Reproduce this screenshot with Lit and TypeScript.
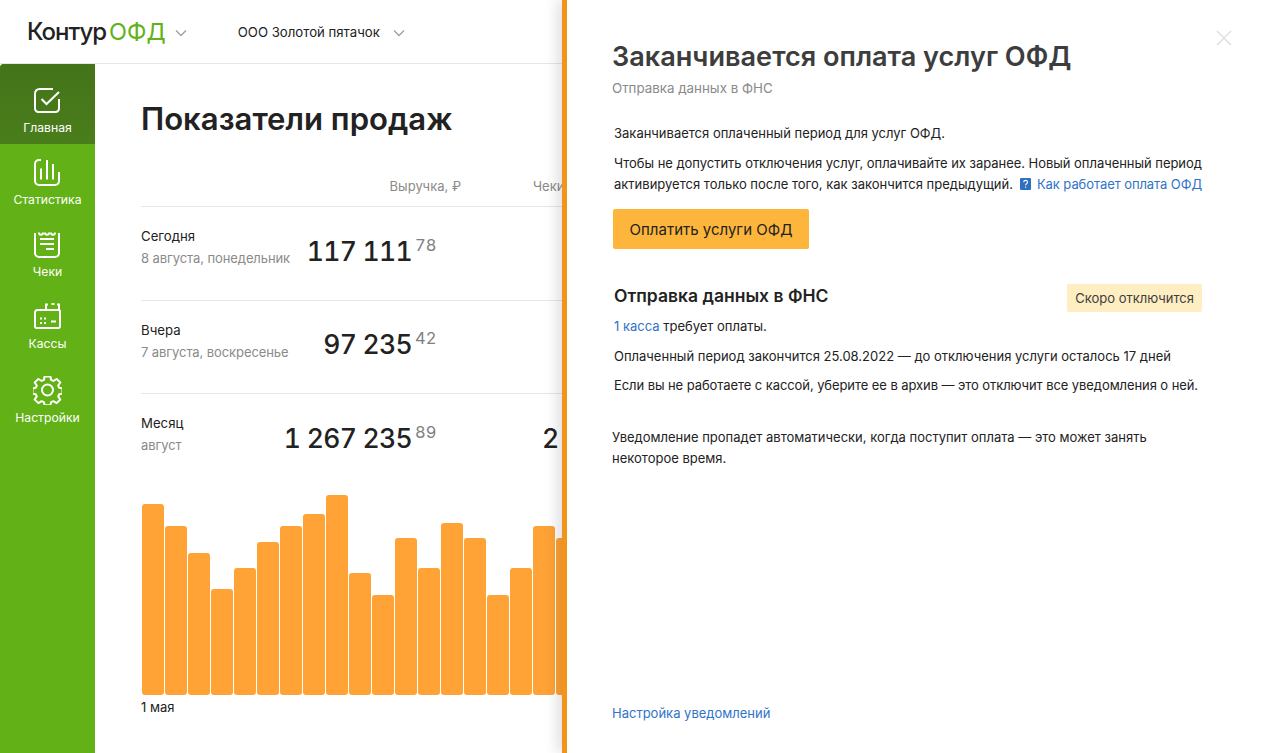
import { LitElement, html, css, svg } from "lit";
import { customElement } from "lit/decorators.js";

const BARS = [191,169,142,106,127,153,169,181,200,122,100,157,127,172,157,100,127,169,157];

const chev = html`<svg class="chev" width="12" height="8" viewBox="0 0 12 8"><path d="M1 1.5l5 5 5-5" fill="none" stroke="#a0a0a0" stroke-width="1.3"/></svg>`;

const ICONS: Record<string, unknown> = {
  home: svg`<path d="M20 2H6.500A4.500 4.500 0 0 0 2 6.500v15A3.500 3.500 0 0 0 5.500 25h17a3.500 3.500 0 0 0 3.500-3.500V12" fill="none" stroke="#fff" stroke-width="2"/><path d="M8.500 12l5 5L26 5" fill="none" stroke="#fff" stroke-width="2"/>`,
  stats: svg`<path d="M8 1H6A4 4 0 0 0 2 5v17a4 4 0 0 0 4 4h16a4 4 0 0 0 4-4v-9M8 9.500V20.500M14 1v19.500M20 5v15.500" fill="none" stroke="#fff" stroke-width="2"/>`,
  checks: svg`<path d="M2 2v20a4 4 0 0 0 4 4h16a4 4 0 0 0 4-4V2" fill="none" stroke="#fff" stroke-width="2"/><path d="M6 1.500c0 3 4 3 4 0M12 1.500c0 3 4 3 4 0M18 1.500c0 3 4 3 4 0M7 8h14M7 13h14M13 18h8" fill="none" stroke="#fff" stroke-width="2"/>`,
  kassa: svg`<path d="M13 7H4.500A2.500 2.500 0 0 0 2 9.500v14A1.500 1.500 0 0 0 3.500 25h22a1.500 1.500 0 0 0 1.500-1.500V8a1 1 0 0 0-1-1h-13V1.500h2M18.500 1h3M24 1.500h2V7" fill="none" stroke="#fff" stroke-width="2"/><path d="M7 15.500h2M11 15.500h2M7 20h2M11 20h2M18 18.500h5" fill="none" stroke="#fff" stroke-width="2"/>`,
  gear: svg`<path d="M11.600 1.500h5.800l.7 3.700 2.300 1 3.200-2.100 3.700 3.700-2.100 3.200 1 2.300 3.300.7v5.400l-3.300.7-1 2.300 2.100 3.200-3.700 3.700-3.200-2.100-2.300 1-.7 3.300h-5.800l-.7-3.300-2.300-1-3.200 2.100-3.700-3.700 2.100-3.200-1-2.300-3.300-.7v-5.400l3.300-.7 1-2.300-2.100-3.200 3.700-3.700 3.200 2.100 2.300-1z" fill="none" stroke="#fff" stroke-width="2" stroke-linejoin="round" transform="translate(0 -1) scale(1 .96)"/><circle cx="14.500" cy="14" r="5.500" fill="none" stroke="#fff" stroke-width="2"/>`,
};

@customElement("nav-item")
class NavItem extends LitElement {
  static properties = { icon: {}, label: {}, active: { type: Boolean, reflect: true } };
  declare icon: string; declare label: string; declare active: boolean;
  static styles = css`
    :host { display: flex; flex-direction: column; align-items: center; height: 72px; color: #fff; font: 12.200px/16px Inter, sans-serif; padding-top: 15px; box-sizing: border-box; }
    :host([active]) { height: 80px; padding-top: 23px; background: linear-gradient(#44741a, #4a7d1b); border-top-left-radius: 4px; }
    :host([last]) { padding-top: 16px; }
    svg { display: block; margin-bottom: 4px; }
    :host([last]) svg { margin-bottom: 5px; }
  `;
  render() {
    return html`<svg width="29" height="29" viewBox="0 0 29 29">${ICONS[this.icon]}</svg><span>${this.label}</span>`;
  }
}

@customElement("app-root")
class AppRoot extends LitElement {
  static styles = css`
    :host { display: block; position: relative; width: 1262px; height: 753px; overflow: hidden; background: #fff; color: #222; font: 13px/21px Inter, sans-serif; }
    .header { height: 64px; box-sizing: border-box; border-bottom: 1px solid #e6e6e6; display: flex; align-items: center; padding-left: 27px; }
    .logo { font-size: 24px; font-weight: 500; letter-spacing: -1px; color: #222; display: flex; gap: 3px; }
    .logo b { font-weight: 400; font-size: 23.500px; color: #62b116; letter-spacing: 0; }
    .chev { margin-left: 9px; margin-top: 2px; display: block; }
    .company { margin-left: 51px; margin-top: 1px; font-size: 13.200px; color: #222; }
    .chev2 { margin-left: 4px; }
    .body { display: flex; height: 689px; }
    .nav { width: 95px; flex: none; background: #62b116; border-top-left-radius: 4px; }
    .main { flex: 1; padding: 35px 0 0 46px; min-width: 0; }
    h1 { margin: 0; font-size: 31.100px; line-height: 40px; font-weight: 600; color: #222; }
    .thead { display: flex; margin: 37px 0 10px; height: 20px; line-height: 20px; color: #8a8a8a; }
    .thead span:first-child { width: 320px; text-align: right; }
    .thead .c { padding-left: 72px; white-space: nowrap; }
    .row { display: flex; border-top: 1px solid #e6e6e6; height: 93.500px; box-sizing: border-box; padding-top: 19px; }
    .cell { width: 271px; flex: none; display: flex; justify-content: space-between; }
    .lbl { font-size: 13.200px; line-height: 20px; color: #222; }
    .sub { font-size: 13px; line-height: 20px; margin-top: 2px; color: #8a8a8a; white-space: nowrap; letter-spacing: -0.09px; }
    .num { margin-top: 8px; font-size: 26.500px; line-height: 34px; font-weight: 500; color: #222; display: flex; align-items: flex-start; white-space: nowrap; font-variant-numeric: tabular-nums; letter-spacing: -0.7px; }
    .num.tight { margin-top: 7px; }
    .num sup { font-size: 16.500px; line-height: 22px; letter-spacing: 0; color: #808080; font-weight: 400; margin-left: 3px; width: 22px; margin-right: -25px; }
    .extra { padding-left: 130px; }
    .rail { display: flex; align-items: flex-end; gap: 1px; height: 200px; margin-top: 8px; margin-left: 1px; overflow: hidden; }
    .bar { flex: none; width: 22px; background: #ffa336; border-radius: 3px; }
    .first { margin-top: 2px; line-height: 20px; }
    .panel { position: absolute; top: 0; bottom: 0; left: 562px; right: 0; background: #fff; border-left: 5px solid #f29419; box-shadow: -4px 0 14px rgba(0,0,0,.14); padding: 37px 60px 29px 45px; display: flex; flex-direction: column; }
    .panel h2 { margin: 0; font-size: 27.100px; line-height: 40px; font-weight: 600; color: #3d3d3d; white-space: nowrap; }
    .panel .subtitle { margin-top: 1px; line-height: 20px; font-size: 13.330px; color: #8a8a8a; }
    .content { margin: 25px 0 0 2px; line-height: 21px; white-space: nowrap; }
    p { margin: 0 0 9px; }
    p.fit { letter-spacing: -0.08px; }
    .tighter { letter-spacing: -0.035px; }
    a { color: #2f74c8; text-decoration: none; }
    a.how { letter-spacing: -0.08px; }
    .btn { display: flex; align-items: center; margin-top: 14px; margin-left: -1px; height: 40px; width: 196px; box-sizing: border-box; justify-content: center; background: #fdb63b; border-radius: 2px; font-size: 15px; color: #222; }
    .shead { display: flex; justify-content: space-between; align-items: center; margin-top: 35px; height: 28px; }
    .shead strong { font-size: 17.500px; font-weight: 600; margin-top: -6px; }
    .badge { background: #ffeec2; border-radius: 2px; height: 28px; padding: 0 8px; display: flex; align-items: center; white-space: nowrap; color: #3d3d3d; }
    .lines { margin-top: 4px; }
    .lines p.gap8 { margin-bottom: 8px; }
    .note { margin: 22px 0 0; }
    .foot { margin-top: auto; }
    .help { vertical-align: -1px; margin: 0 6px 0 7px; }
    .close { position: absolute; top: 30px; right: 30px; }
  `;
  rowTpl(lbl: string, sub: string, num: string, cents: string, extra = "", tight = false) {
    return html`<div class="row"><div class="cell"><div><div class="lbl">${lbl}</div><div class="sub">${sub}</div></div><div class="num ${tight ? "tight" : ""}">${num}<sup>${cents}</sup></div></div>${extra ? html`<div class="num extra">${extra}</div>` : ""}</div>`;
  }
  render() {
    return html`
      <div class="header">
        <div class="logo"><span>Контур</span><b>ОФД</b></div>
        ${chev}
        <div class="company">ООО Золотой пятачок</div>
        <span class="chev2">${chev}</span>
      </div>
      <div class="body">
        <div class="nav">
          <nav-item icon="home" label="Главная" active></nav-item>
          <nav-item icon="stats" label="Статистика"></nav-item>
          <nav-item icon="checks" label="Чеки"></nav-item>
          <nav-item icon="kassa" label="Кассы"></nav-item>
          <nav-item icon="gear" label="Настройки" last></nav-item>
        </div>
        <div class="main">
          <h1>Показатели продаж</h1>
          <div class="thead"><span>Выручка, ₽</span><span class="c">Чеки</span></div>
          ${this.rowTpl("Сегодня", "8 августа, понедельник", "117 111", "78")}
          ${this.rowTpl("Вчера", "7 августа, воскресенье", "97 235", "42", "", true)}
          ${this.rowTpl("Месяц", "август", "1 267 235", "89", "2")}
          <div class="rail">${BARS.map((h) => html`<div class="bar" style="height:${h}px"></div>`)}</div>
          <div class="first">1 мая</div>
        </div>
      </div>
      <div class="panel">
        <h2>Заканчивается оплата услуг ОФД</h2>
        <div class="subtitle">Отправка данных в ФНС</div>
        <div class="content">
          <p>Заканчивается оплаченный период для услуг ОФД.</p>
          <p><span class="tighter">Чтобы не допустить отключения услуг, оплачивайте их заранее. Новый оплаченный период</span><br>активируется только после того, как закончится предыдущий.<svg class="help" width="11" height="12" viewBox="0 0 11 12"><rect width="11" height="12" rx="1" fill="#2f6fc0"/><path d="M3.700 4.200c0-2.400 3.800-2.400 3.800 0 0 1.500-1.900 1.500-1.900 3M5.600 8.500v1.300" fill="none" stroke="#fff" stroke-width="1.100"/></svg><a class="how">Как работает оплата ОФД</a></p>
          <div class="btn">Оплатить услуги ОФД</div>
          <div class="shead"><strong>Отправка данных в ФНС</strong><span class="badge">Скоро отключится</span></div>
          <div class="lines">
            <p><a>1 касса</a> требует оплаты.</p>
            <p class="gap8">Оплаченный период закончится 25.08.2022 — до отключения услуги осталось 17 дней</p>
            <p class="fit">Если вы не работаете с кассой, уберите ее в архив — это отключит все уведомления о ней.</p>
          </div>
        </div>
        <div class="note">Уведомление пропадет автоматически, когда поступит оплата — это может занять<br>некоторое время.</div>
        <a class="foot">Настройка уведомлений</a>
        <svg class="close" width="16" height="16" viewBox="0 0 16 16"><path d="M1 1l14 14M15 1L1 15" stroke="#e0e0e0" stroke-width="1.500" fill="none"/></svg>
      </div>
    `;
  }
}
